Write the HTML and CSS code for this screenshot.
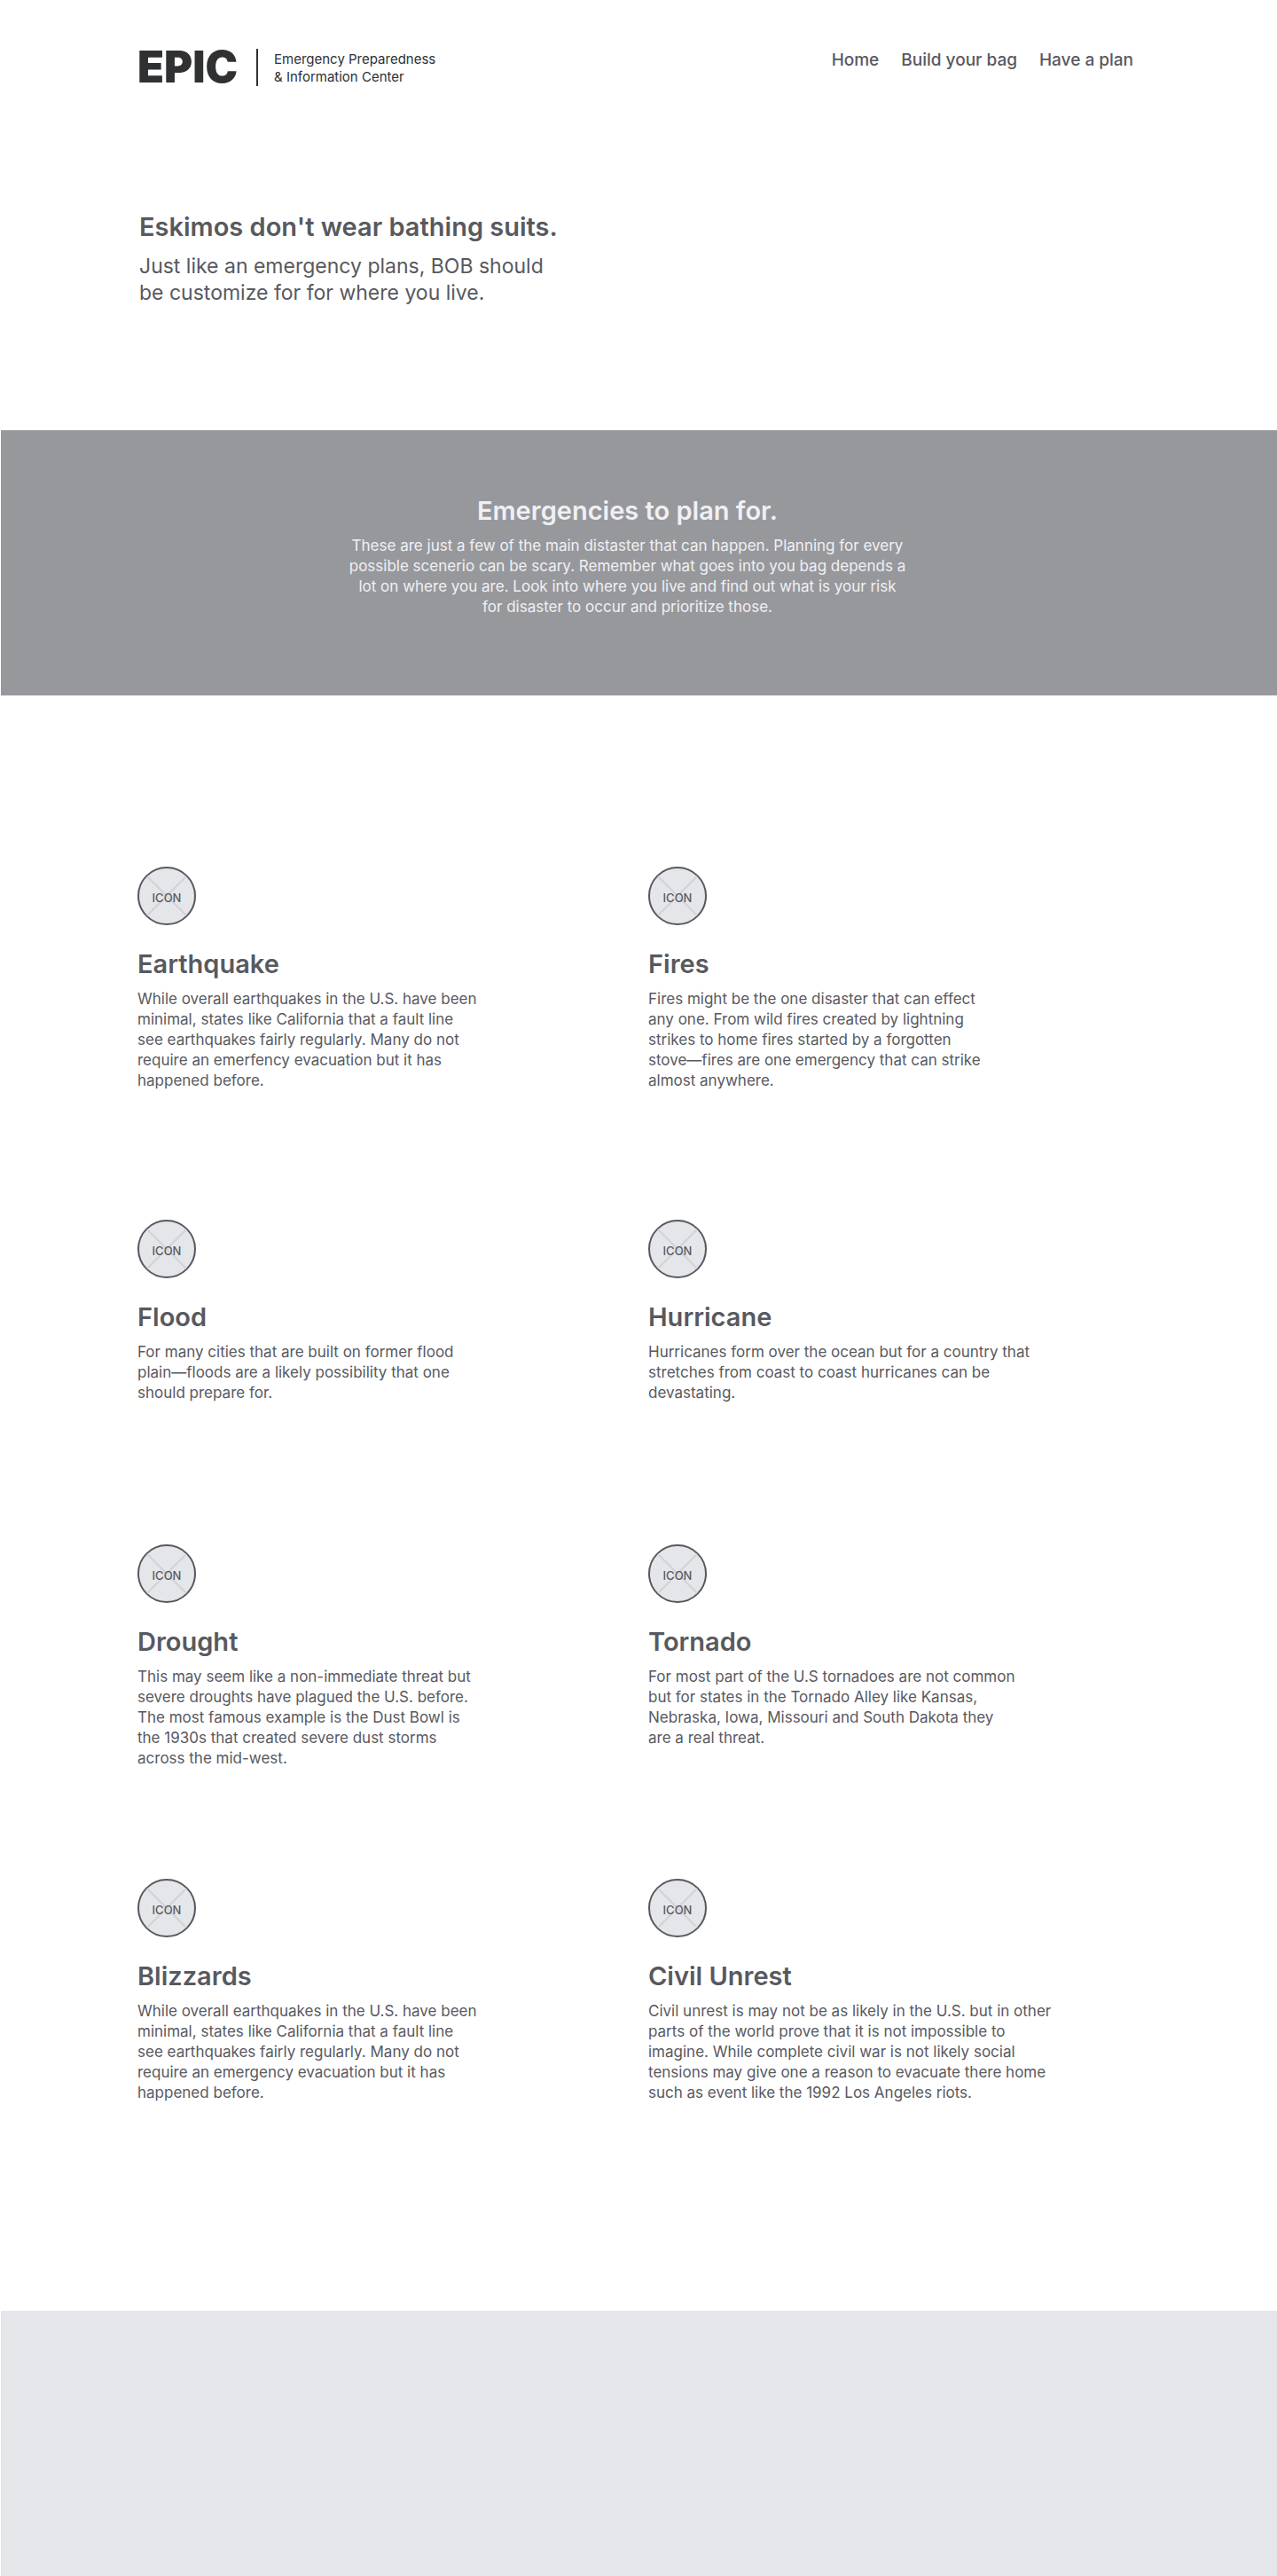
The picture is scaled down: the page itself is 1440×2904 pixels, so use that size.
FILE: index.html
```html
<!DOCTYPE html>
<html lang="en">
<head>
<meta charset="utf-8">
<meta name="viewport" content="width=device-width, initial-scale=1">
<title>EPIC | Emergency Preparedness &amp; Information Center</title>
<link rel="stylesheet" href="styles.css">
</head>
<body>
<header class="site-header">
  <a class="logo" href="#">
    <span class="logo-name">EPIC</span>
    <span class="logo-tagline">Emergency Preparedness<br>&amp; Information Center</span>
  </a>
  <nav class="nav">
    <a href="#">Home</a>
    <a href="#">Build your bag</a>
    <a href="#">Have a plan</a>
  </nav>
</header>
<main>
  <section class="hero">
    <h1 class="title">Eskimos don't wear bathing suits.</h1>
    <p class="lead">Just like an emergency plans, BOB should<br>be customize for for where you live.</p>
  </section>
  <section class="banner">
    <h2 class="title">Emergencies to plan for.</h2>
    <p class="copy">These are just a few of the main distaster that can happen. Planning for every<br>possible scenerio can be scary. Remember what goes into you bag depends a<br>lot on where you are. Look into where you live and find out what is your risk<br>for disaster to occur and prioritize those.</p>
  </section>
  <section class="disasters">
    <article class="card">
      <div class="icon"><svg viewBox="0 0 62 62" aria-hidden="true"><path d="M9 9L53 53M53 9L9 53"/></svg><span>ICON</span></div>
      <h3 class="title">Earthquake</h3>
      <p class="copy">While overall earthquakes in the U.S. have been<br>minimal, states like California that a fault line<br>see earthquakes fairly regularly. Many do not<br>require an emerfency evacuation but it has<br>happened before.</p>
    </article>
    <article class="card">
      <div class="icon"><svg viewBox="0 0 62 62" aria-hidden="true"><path d="M9 9L53 53M53 9L9 53"/></svg><span>ICON</span></div>
      <h3 class="title">Fires</h3>
      <p class="copy">Fires might be the one disaster that can effect<br>any one. From wild fires created by lightning<br>strikes to home fires started by a forgotten<br>stove—fires are one emergency that can strike<br>almost anywhere.</p>
    </article>
    <article class="card">
      <div class="icon"><svg viewBox="0 0 62 62" aria-hidden="true"><path d="M9 9L53 53M53 9L9 53"/></svg><span>ICON</span></div>
      <h3 class="title">Flood</h3>
      <p class="copy">For many cities that are built on former flood<br>plain—floods are a likely possibility that one<br>should prepare for.</p>
    </article>
    <article class="card">
      <div class="icon"><svg viewBox="0 0 62 62" aria-hidden="true"><path d="M9 9L53 53M53 9L9 53"/></svg><span>ICON</span></div>
      <h3 class="title">Hurricane</h3>
      <p class="copy">Hurricanes form over the ocean but for a country that<br>stretches from coast to coast hurricanes can be<br>devastating.</p>
    </article>
    <article class="card">
      <div class="icon"><svg viewBox="0 0 62 62" aria-hidden="true"><path d="M9 9L53 53M53 9L9 53"/></svg><span>ICON</span></div>
      <h3 class="title">Drought</h3>
      <p class="copy">This may seem like a non-immediate threat but<br>severe droughts have plagued the U.S. before.<br>The most famous example is the Dust Bowl is<br>the 1930s that created severe dust storms<br>across the mid-west.</p>
    </article>
    <article class="card">
      <div class="icon"><svg viewBox="0 0 62 62" aria-hidden="true"><path d="M9 9L53 53M53 9L9 53"/></svg><span>ICON</span></div>
      <h3 class="title">Tornado</h3>
      <p class="copy">For most part of the U.S tornadoes are not common<br>but for states in the Tornado Alley like Kansas,<br>Nebraska, Iowa, Missouri and South Dakota they<br>are a real threat.</p>
    </article>
    <article class="card">
      <div class="icon"><svg viewBox="0 0 62 62" aria-hidden="true"><path d="M9 9L53 53M53 9L9 53"/></svg><span>ICON</span></div>
      <h3 class="title">Blizzards</h3>
      <p class="copy">While overall earthquakes in the U.S. have been<br>minimal, states like California that a fault line<br>see earthquakes fairly regularly. Many do not<br>require an emergency evacuation but it has<br>happened before.</p>
    </article>
    <article class="card">
      <div class="icon"><svg viewBox="0 0 62 62" aria-hidden="true"><path d="M9 9L53 53M53 9L9 53"/></svg><span>ICON</span></div>
      <h3 class="title">Civil Unrest</h3>
      <p class="copy">Civil unrest is may not be as likely in the U.S. but in other<br>parts of the world prove that it is not impossible to<br>imagine. While complete civil war is not likely social<br>tensions may give one a reason to evacuate there home<br>such as event like the 1992 Los Angeles riots.</p>
    </article>
  </section>
</main>
<footer class="site-footer"></footer>
</body>
</html>
```
FILE: styles.css
```css
* { box-sizing: border-box; }

body {
  margin: 0;
  min-height: 100vh;
  display: flex;
  flex-direction: column;
  background: #fff;
  color: #58595f;
  font-family: Inter, "Liberation Sans", sans-serif;
}

h1, h2, h3, p { margin: 0; }
a { color: inherit; text-decoration: none; }

.title { font-size: 29px; line-height: 36px; font-weight: 600; }
.lead { font-size: 23px; line-height: 30px; }
.copy { font-size: 17px; line-height: 23px; }

.site-header {
  display: flex;
  justify-content: space-between;
  align-items: flex-start;
  padding: 55px 162px 0 155px;
}

.logo { display: flex; align-items: center; color: #2f3133; }
.logo-name {
  width: 134px;
  font-size: 49px;
  line-height: 42px;
  font-weight: 900;
}
.logo-tagline {
  padding: 2px 0 0 18px;
  border-left: 2px solid #2f3133;
  font-size: 15px;
  line-height: 20px;
}

.nav { display: flex; gap: 25px; padding-top: 1px; font-size: 19px; line-height: 24px; font-weight: 500; }

.hero { padding: 141px 155px 140px 157px; }
.hero .lead { margin-top: 11px; }

.banner {
  margin-left: 1px;
  padding: 73px 26px 88px 0;
  background: #97989c;
  color: #f0f0f4;
  text-align: center;
}
.banner .copy { margin-top: 10px; }

.disasters {
  display: grid;
  grid-template-columns: 1fr 1fr;
  grid-template-rows: minmax(398px, auto) minmax(366px, auto) minmax(377px, auto) auto;
  column-gap: 24px;
  padding: 193px 157px 234px 155px;
}

.icon {
  display: grid;
  place-items: center;
  width: 66px;
  height: 66px;
  border: 2px solid #58595f;
  border-radius: 50%;
  background: #e5e6ea;
  font-size: 13px;
  line-height: 16px;
  font-weight: 500;
}
.icon svg, .icon span { grid-area: 1 / 1; }
.icon svg { width: 62px; height: 62px; stroke: #d2d3d5; stroke-width: 2; }
.icon span { padding-top: 3px; }

.card .title { margin-top: 26px; }
.card .copy { margin-top: 10px; }

.site-footer {
  flex: 1 0 299px;
  margin-left: 1px;
  background: #e5e6ea;
}
```
